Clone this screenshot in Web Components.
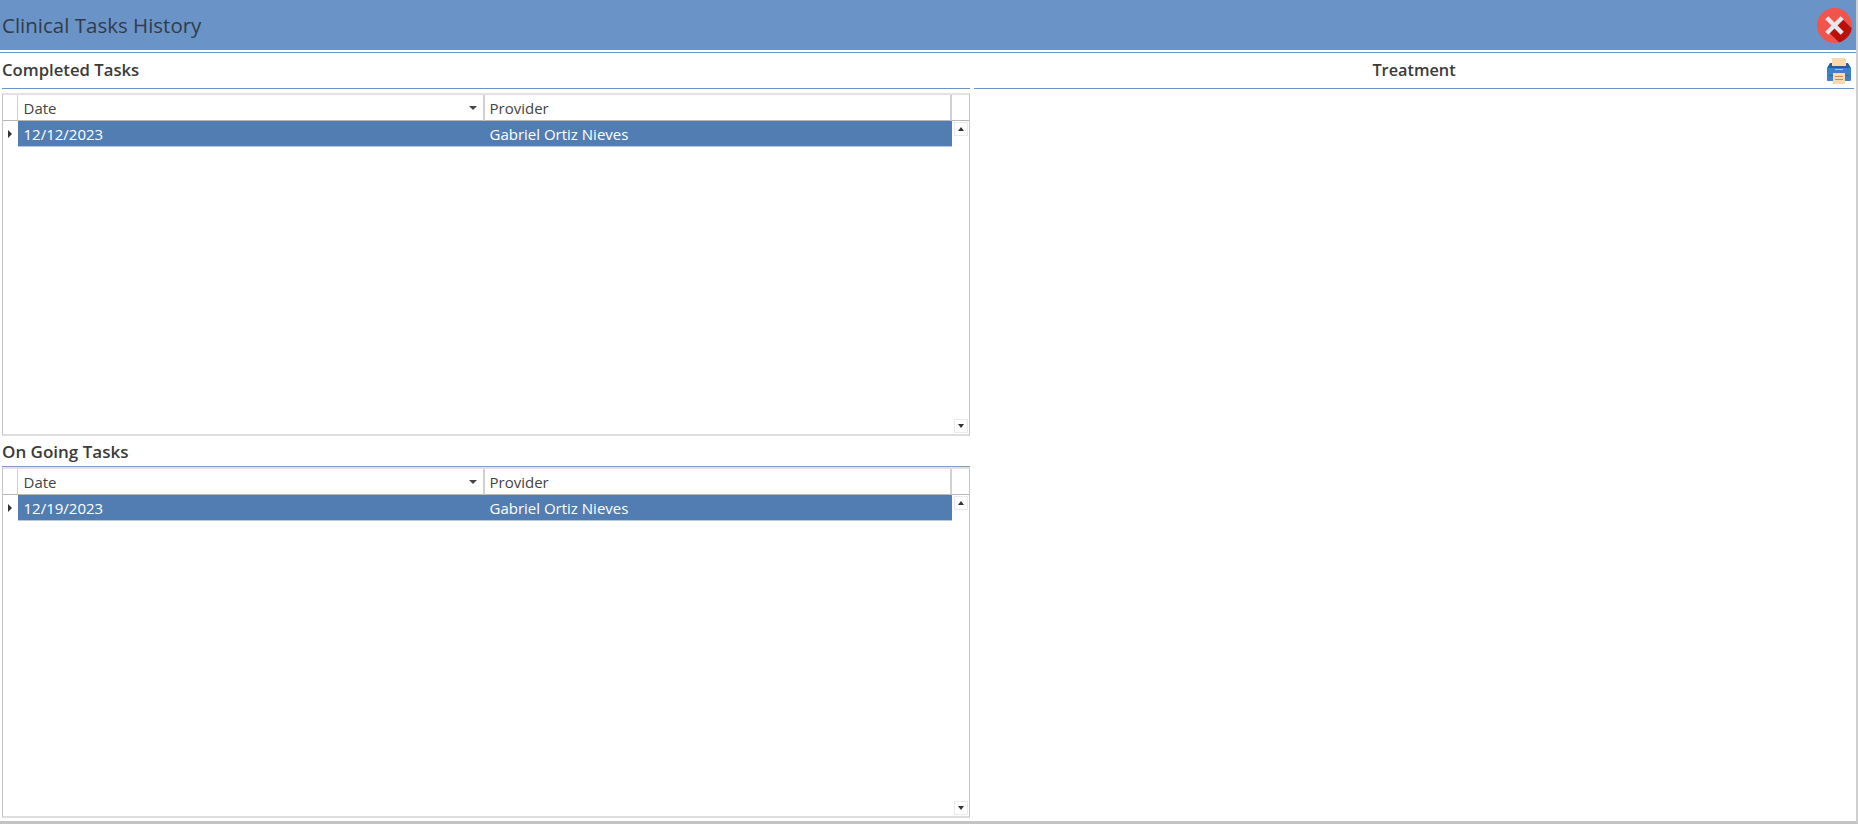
<!DOCTYPE html>
<html>
<head>
<meta charset="utf-8">
<title>Clinical Tasks History</title>
<style>
  html, body { margin: 0; height: 100%; background: #fff; overflow: hidden; }
  body { font-family: "Open Sans", "Noto Sans", sans-serif; color: #3b3b3b; }
</style>
</head>
<body>
<task-window heading="Clinical Tasks History">
  <div slot="left" style="display:contents">
    <task-panel heading="Completed Tasks" style="height:383px">
      <task-grid date="12/12/2023" provider="Gabriel Ortiz Nieves"></task-grid>
    </task-panel>
    <task-panel heading="On Going Tasks" compact style="height:382px">
      <task-grid date="12/19/2023" provider="Gabriel Ortiz Nieves"></task-grid>
    </task-panel>
  </div>
  <task-panel slot="right" heading="Treatment" centered printable></task-panel>
</task-window>

<script>
const closeIcon = `
  <svg width="35" height="35" viewBox="0 0 34 34">
    <defs><clipPath id="c"><circle cx="17" cy="17" r="17"/></clipPath></defs>
    <circle cx="17" cy="17" r="17" fill="#f2544c"/>
    <path clip-path="url(#c)" d="M11 23 L23 9 L36 22 V36 H24 Z" fill="#bb1009"/>
    <path d="M11 8 L17 14 L23 8 L26 11 L20 17 L26 23 L23 26 L17 20 L11 26 L8 23 L14 17 L8 11 Z" fill="#e4e8ef"/>
  </svg>`;

const printIcon = `
  <svg width="26" height="26" viewBox="0 0 26 26">
    <path d="M6 0 H18 L20 2 V8 H6 Z" fill="#fbd9ae"/>
    <path d="M18 0 L20 2 H18 Z" fill="#e9c79b"/>
    <path d="M4 5 H6 V8 H20 V5 H22 L25 10 H1 Z" fill="#2b5f97"/>
    <path d="M1 10 H25 V22 Q25 23 24 23 H2 Q1 23 1 22 Z" fill="#4081c4"/>
    <rect x="9" y="11" width="8" height="1" fill="#a9c8e8"/>
    <rect x="3" y="17" width="20" height="1" fill="#2f6aa6"/>
    <rect x="7" y="15" width="12" height="11" fill="#fbd9ae"/>
    <rect x="9" y="18" width="8" height="1" fill="#b98d5c"/>
    <rect x="9" y="21" width="8" height="1" fill="#b98d5c"/>
  </svg>`;

class TaskWindow extends HTMLElement {
  constructor() {
    super();
    this.attachShadow({ mode: 'open' });
    this.shadowRoot.innerHTML = `
      <style>
        :host {
          display: flex;
          flex-direction: column;
          height: 824px;
          box-sizing: border-box;
          border-right: 2px solid #cfcfcf;
          border-bottom: 3px solid #c4c4c4;
        }
        #bar {
          height: 50px;
          flex: none;
          background: #6a94c8;
          display: flex;
          align-items: center;
          justify-content: space-between;
          padding: 0 4px 0 2px;
          border-bottom: 1px solid #fff;
        }
        h1 {
          margin: 0;
          font-size: 20.500px;
          font-weight: 400;
          color: #333b47;
        }
        #close { display: flex; margin-top: 1px; }
        #rule { height: 1px; margin-top: 1px; flex: none; background: #6a94c8; }
        #body {
          flex: 1;
          display: grid;
          grid-template-columns: 968px 1fr;
          column-gap: 4px;
          padding: 0 2px 0 2px;
          min-height: 0;
        }
        #left { display: flex; flex-direction: column; }
      </style>
      <div id="bar"><h1></h1><div id="close">${closeIcon}</div></div>
      <div id="rule"></div>
      <div id="body">
        <div id="left"><slot name="left"></slot></div>
        <div><slot name="right"></slot></div>
      </div>`;
    this.shadowRoot.querySelector('h1').textContent = this.getAttribute('heading');
  }
}
customElements.define('task-window', TaskWindow);

class TaskPanel extends HTMLElement {
  constructor() {
    super();
    this.attachShadow({ mode: 'open' });
    this.shadowRoot.innerHTML = `
      <style>
        :host { display: flex; flex-direction: column; box-sizing: border-box; }
        #head {
          height: 36px;
          flex: none;
          display: flex;
          align-items: center;
          position: relative;
          border-bottom: 1px solid #6a94c8;
          box-sizing: border-box;
          padding-bottom: 2px;
          font-size: 16.300px;
          font-weight: 600;
          color: #3b3b3b;
        }
        :host(:not([centered])) #head { font-size: 16.700px; }
        :host([compact]) #head { height: 31px; padding: 1.500px 0 0; font-size: 17px; border-bottom-color: #7f9cc0; }
        :host([centered]) #head { justify-content: center; }
        #print { position: absolute; right: 2px; top: 5px; display: none; }
        :host([printable]) #print { display: flex; }
        #content { flex: 1; min-height: 0; display: flex; padding-top: 4px; }
        :host([compact]) #content { padding-top: 0; }
      </style>
      <div id="head"><span id="title"></span><div id="print">${printIcon}</div></div>
      <div id="content"><slot></slot></div>`;
    this.shadowRoot.getElementById('title').textContent = this.getAttribute('heading');
  }
}
customElements.define('task-panel', TaskPanel);

class TaskGrid extends HTMLElement {
  constructor() {
    super();
    this.attachShadow({ mode: 'open' });
    this.shadowRoot.innerHTML = `
      <style>
        :host {
          display: grid;
          flex: 1;
          grid-template-columns: 15px 467px 1fr 17px;
          grid-template-rows: 26px 26px 1fr;
          border: 1px solid #c4c4c4;
          border-top: 2px solid #e2e2e2;
          border-bottom: 2px solid #dedede;
          font-size: 15px;
          background: #fff;
          box-sizing: border-box;
        }
        .hd {
          border-right: 2px solid #d0d0d0;
          border-bottom: 1px solid #b8b8b8;
          display: flex;
          align-items: center;
          padding-left: 4.500px;
          box-sizing: border-box;
          color: #444;
          justify-content: space-between;
        }
        .hd.corner { padding: 0; border-right-width: 1px; }
        .hd.end { padding: 0; border-right: 0; }
        .hd.first, .cell.first { padding-left: 5.500px; }
        .sort { width: 0; height: 0; margin-right: 6px; border: 4px solid transparent; border-top-color: #444; border-bottom: 0; }
        .mark { display: flex; align-items: center; justify-content: center; border-right: 1px solid #fff; }
        .mark i { width: 0; height: 0; border: 4px solid transparent; border-left: 4px solid #333; border-right: 0; }
        .cell {
          background: #527db2;
          color: #fff;
          display: flex;
          align-items: center;
          padding-left: 4.500px;
          border-bottom: 1px solid #b9c7dc;
          box-sizing: border-box;
          white-space: nowrap;
        }
        #scroll {
          grid-column: 4;
          grid-row: 2 / 4;
          display: flex;
          flex-direction: column;
          justify-content: space-between;
          align-items: center;
          padding: 1px 0;
        }
        .btn {
          width: 14px;
          height: 14px;
          border: 1px solid #eaeaea;
          box-sizing: border-box;
          display: flex;
          align-items: center;
          justify-content: center;
        }
        .up { width: 0; height: 0; border: 3.500px solid transparent; border-bottom: 4px solid #333; border-top: 0; }
        .down { width: 0; height: 0; border: 3.500px solid transparent; border-top: 4px solid #333; border-bottom: 0; }
      </style>
      <div class="hd corner"></div>
      <div class="hd first"><span>Date</span><span class="sort"></span></div>
      <div class="hd"><span>Provider</span></div>
      <div class="hd end"></div>
      <div class="mark"><i></i></div>
      <div class="cell first" id="date"></div>
      <div class="cell" id="provider"></div>
      <div id="scroll">
        <div class="btn"><span class="up"></span></div>
        <div class="btn"><span class="down"></span></div>
      </div>`;
    this.shadowRoot.getElementById('date').textContent = this.getAttribute('date');
    this.shadowRoot.getElementById('provider').textContent = this.getAttribute('provider');
  }
}
customElements.define('task-grid', TaskGrid);
</script>
</body>
</html>
